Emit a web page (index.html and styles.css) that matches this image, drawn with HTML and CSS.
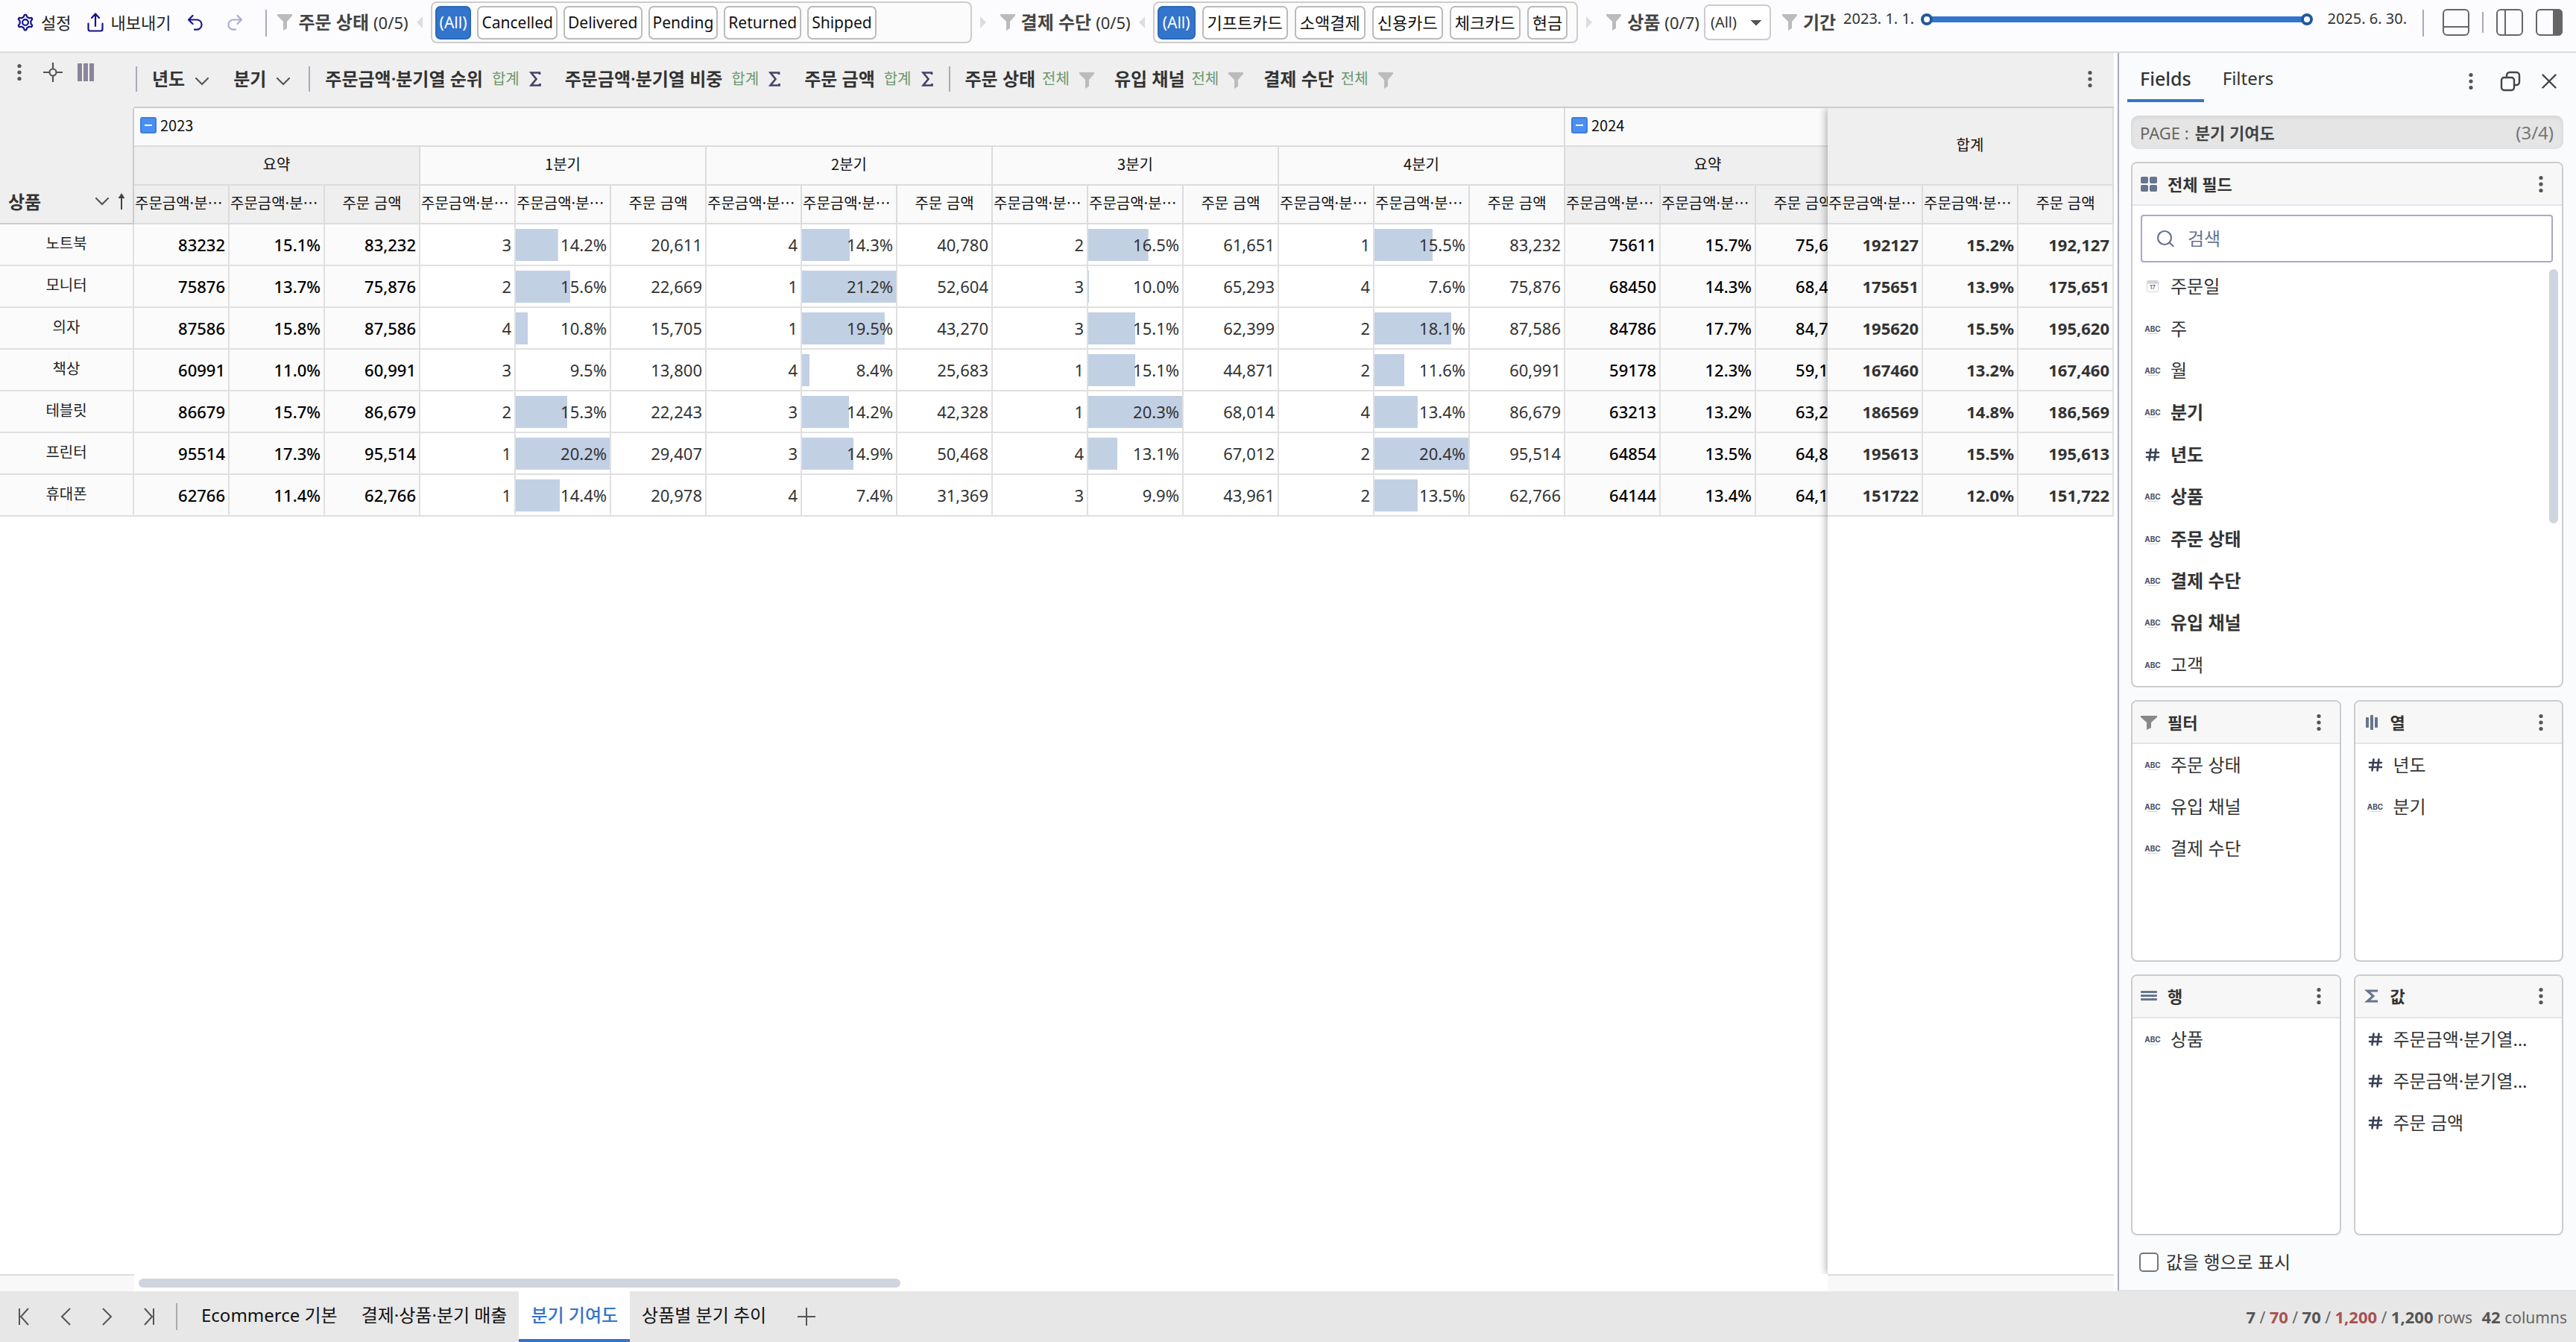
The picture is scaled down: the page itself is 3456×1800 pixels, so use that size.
FILE: index.html
```html
<!DOCTYPE html>
<html lang="ko">
<head>
    <meta charset="UTF-8">
    <meta name="viewport" content="width=device-width, initial-scale=1.0">
    <title>분기 기여도</title>
    <link rel="stylesheet" href="styles.css">
</head>
<body>
    <svg class="sprite" aria-hidden="true">
        <symbol id="i-funnel" viewBox="0 0 20 22"><path d="M0 0h20v2l-7 8v9l-5 3V10L0 2z" fill="currentColor"/></symbol>
        <symbol id="i-kebab" viewBox="0 0 8 24"><g fill="currentColor"><circle cx="4" cy="3.500" r="2.600"/><circle cx="4" cy="12" r="2.600"/><circle cx="4" cy="20.500" r="2.600"/></g></symbol>
        <symbol id="i-chevron" viewBox="0 0 20 12"><path d="M2 2l8 8 8-8" fill="none" stroke="currentColor" stroke-width="2.2" stroke-linecap="round"/></symbol>
        <symbol id="i-sigma" viewBox="0 0 16 20"><path d="M14 4V1.500H2.500l7 8.500-7 8.500H14.500V16" fill="none" stroke="currentColor" stroke-width="2.6"/></symbol>
        <symbol id="i-hash" viewBox="0 0 20 20"><path d="M2 7h16M2 13h16M7.500 2.500L5.500 17.500M14.500 2.500L12.500 17.500" fill="none" stroke="currentColor" stroke-width="2.600" stroke-linecap="round"/></symbol>
        <symbol id="i-tri-left" viewBox="0 0 8 16"><path d="M8 0v16L0 8z" fill="currentColor"/></symbol>
        <symbol id="i-tri-right" viewBox="0 0 8 16"><path d="M0 0v16l8-8z" fill="currentColor"/></symbol>
    </svg>

    <div class="app">
        <header class="toolbar">
            <div class="commands">
                <button type="button" class="command"><svg width="26" height="26" viewBox="0 0 24 24" fill="none" stroke="currentColor" stroke-width="2" stroke-linejoin="round"><path d="M9.800 4.300L11 1.500h2l1.200 2.800 2.400 1.400 3-.4 1 1.700-1.800 2.500v2.900l1.800 2.500-1 1.800-3-.4-2.400 1.400L13 20.500h-2l-1.200-2.800-2.400-1.400-3 .4-1-1.800 1.800-2.500V9.500L3.400 7l1-1.700 3 .4z" transform="translate(0 1)"/><circle cx="12" cy="12" r="3.600"/></svg>설정</button>
                <button type="button" class="command"><svg width="24" height="26" viewBox="0 0 24 26" fill="none" stroke="currentColor" stroke-width="2.200" stroke-linecap="round" stroke-linejoin="round"><path d="M2.500 14.500V22c0 1.500 1 2.500 2.500 2.500h14c1.500 0 2.500-1 2.500-2.500v-7.500M12 18V2M7 7l5-5.500L17 7"/></svg>내보내기</button>
                <button type="button" class="command" aria-label="Undo"><svg width="24" height="24" viewBox="0 0 24 24" fill="none" stroke="currentColor" stroke-width="2.200" stroke-linecap="round" stroke-linejoin="round"><path d="M8.500 3L3 8.500l5.500 5.500M3 8.500h12a6.700 6.700 0 0 1 0 13.200h-4"/></svg></button>
                <button type="button" class="command" aria-label="Redo" disabled><svg width="24" height="24" viewBox="0 0 24 24" fill="none" stroke="currentColor" stroke-width="2.200" stroke-linecap="round" stroke-linejoin="round"><path d="M15.500 3L21 8.500 15.500 14M21 8.500H9a6.700 6.700 0 0 0 0 13.200h4"/></svg></button>
            </div>

            <div class="filter filter-status">
                <svg class="funnel"><use href="#i-funnel"/></svg>
                <b>주문 상태</b><span class="count">(0/5)</span>
                <svg class="tri"><use href="#i-tri-left"/></svg>
                <div class="chips">
                    <button type="button" class="chip active">(All)</button>
                    <button type="button" class="chip">Cancelled</button>
                    <button type="button" class="chip">Delivered</button>
                    <button type="button" class="chip">Pending</button>
                    <button type="button" class="chip">Returned</button>
                    <button type="button" class="chip">Shipped</button>
                </div>
                <svg class="tri"><use href="#i-tri-right"/></svg>
            </div>

            <div class="filter filter-payment">
                <svg class="funnel"><use href="#i-funnel"/></svg>
                <b>결제 수단</b><span class="count">(0/5)</span>
                <svg class="tri"><use href="#i-tri-left"/></svg>
                <div class="chips">
                    <button type="button" class="chip active">(All)</button>
                    <button type="button" class="chip">기프트카드</button>
                    <button type="button" class="chip">소액결제</button>
                    <button type="button" class="chip">신용카드</button>
                    <button type="button" class="chip">체크카드</button>
                    <button type="button" class="chip">현금</button>
                </div>
                <svg class="tri"><use href="#i-tri-right"/></svg>
            </div>

            <div class="filter filter-product">
                <svg class="funnel"><use href="#i-funnel"/></svg>
                <label for="product"><b>상품</b></label><span class="count">(0/7)</span>
                <select id="product"><option>(All)</option></select>
            </div>

            <div class="filter filter-period">
                <svg class="funnel"><use href="#i-funnel"/></svg>
                <b>기간</b>
                <span class="date">2023. 1. 1.</span>
                <div class="range">
                    <input type="range" min="0" max="100" value="0" aria-label="시작일">
                    <input type="range" min="0" max="100" value="100" aria-label="종료일">
                </div>
                <span class="date">2025. 6. 30.</span>
            </div>

            <div class="layout-buttons">
                <button type="button" aria-label="Bottom panel"><svg width="36" height="36" viewBox="0 0 36 36" fill="none" stroke="currentColor" stroke-width="2"><rect x="1" y="1" width="34" height="34" rx="5"/><path d="M1 24h34"/></svg></button>
                <span class="split"></span>
                <button type="button" aria-label="Left panel"><svg width="36" height="36" viewBox="0 0 36 36" fill="none" stroke="currentColor" stroke-width="2"><rect x="1" y="1" width="34" height="34" rx="5"/><path d="M12 1v34"/></svg></button>
                <button type="button" aria-label="Right panel"><svg width="36" height="36" viewBox="0 0 36 36" fill="none" stroke="currentColor" stroke-width="2"><rect x="1" y="1" width="34" height="34" rx="5"/><path d="M24 1h6a5 5 0 0 1 5 5v24a5 5 0 0 1-5 5h-6z" fill="currentColor"/></svg></button>
            </div>
        </header>

        <main class="workspace">
            <div class="field-bar">
                <div class="grid-tools">
                    <button type="button" aria-label="Menu"><svg class="kebab"><use href="#i-kebab"/></svg></button>
                    <button type="button" aria-label="Fit"><svg width="26" height="26" viewBox="0 0 26 26" fill="none" stroke="#555" stroke-width="2.200"><circle cx="13" cy="13" r="4.500"/><path d="M13 0v8.500M13 17.500V26M0 13h8.500M17.500 13H26"/></svg></button>
                    <button type="button" aria-label="Columns"><svg width="22" height="24" viewBox="0 0 22 24" fill="#8a8599"><path d="M0 0h6v24H0zM8 0h6v24H8zM16 0h6v24h-6z"/></svg></button>
                </div>
                <div class="fields">
                    <div class="field-group columns">
                        <button type="button" class="field">년도<svg class="chevron"><use href="#i-chevron"/></svg></button>
                        <button type="button" class="field">분기<svg class="chevron"><use href="#i-chevron"/></svg></button>
                    </div>
                    <div class="field-group values">
                        <button type="button" class="field">주문금액·분기열 순위<small>합계</small><svg class="sigma"><use href="#i-sigma"/></svg></button>
                        <button type="button" class="field">주문금액·분기열 비중<small>합계</small><svg class="sigma"><use href="#i-sigma"/></svg></button>
                        <button type="button" class="field">주문 금액<small>합계</small><svg class="sigma"><use href="#i-sigma"/></svg></button>
                    </div>
                    <div class="field-group filters">
                        <button type="button" class="field">주문 상태<small>전체</small><svg class="funnel"><use href="#i-funnel"/></svg></button>
                        <button type="button" class="field">유입 채널<small>전체</small><svg class="funnel"><use href="#i-funnel"/></svg></button>
                        <button type="button" class="field">결제 수단<small>전체</small><svg class="funnel"><use href="#i-funnel"/></svg></button>
                    </div>
                    <button type="button" class="more" aria-label="More"><svg class="kebab"><use href="#i-kebab"/></svg></button>
                </div>
            </div>

            <div class="grid-area">
                <div class="pivot">
                    <table>
                        <colgroup><col class="col-head"><col span="18"></colgroup>
                        <thead>
                            <tr>
                                <th rowspan="3" class="corner"><div class="corner-label">상품<svg class="chevron"><use href="#i-chevron"/></svg><svg class="sort" viewBox="0 0 10 22"><path d="M5 0l4.500 7H.5zM4 6h2v16H4z" fill="#444"/></svg></div></th>
                                <th colspan="15" class="year"><div class="year-label"><button type="button" class="collapse" aria-label="접기"></button>2023</div></th>
                                <th colspan="3" class="year"><div class="year-label"><button type="button" class="collapse" aria-label="접기"></button>2024</div></th>
                            </tr>
                            <tr>
                                <th colspan="3" class="sum">요약</th>
                                <th colspan="3">1분기</th>
                                <th colspan="3">2분기</th>
                                <th colspan="3">3분기</th>
                                <th colspan="3">4분기</th>
                                <th colspan="3" class="sum">요약</th>
                            </tr>
                            <tr>
                                <th class="sum">주문금액·분기열 순위</th><th class="sum">주문금액·분기열 비중</th><th class="sum">주문 금액</th>
                                <th>주문금액·분기열 순위</th><th>주문금액·분기열 비중</th><th>주문 금액</th>
                                <th>주문금액·분기열 순위</th><th>주문금액·분기열 비중</th><th>주문 금액</th>
                                <th>주문금액·분기열 순위</th><th>주문금액·분기열 비중</th><th>주문 금액</th>
                                <th>주문금액·분기열 순위</th><th>주문금액·분기열 비중</th><th>주문 금액</th>
                                <th class="sum">주문금액·분기열 순위</th><th class="sum">주문금액·분기열 비중</th><th class="sum">주문 금액</th>
                            </tr>
                        </thead>
                        <tbody>
                            <tr>
                                <th>노트북</th>
                                <td class="sum">83232</td><td class="sum">15.1%</td><td class="sum">83,232</td>
                                <td>3</td><td class="bar" style="--bar: 45%">14.2%</td><td>20,611</td>
                                <td>4</td><td class="bar" style="--bar: 51%">14.3%</td><td>40,780</td>
                                <td>2</td><td class="bar" style="--bar: 64%">16.5%</td><td>61,651</td>
                                <td>1</td><td class="bar" style="--bar: 62%">15.5%</td><td>83,232</td>
                                <td class="sum">75611</td><td class="sum">15.7%</td><td class="sum">75,611</td>
                            </tr>
                            <tr>
                                <th>모니터</th>
                                <td class="sum">75876</td><td class="sum">13.7%</td><td class="sum">75,876</td>
                                <td>2</td><td class="bar" style="--bar: 58%">15.6%</td><td>22,669</td>
                                <td>1</td><td class="bar" style="--bar: 100%">21.2%</td><td>52,604</td>
                                <td>3</td><td class="bar" style="--bar: 1%">10.0%</td><td>65,293</td>
                                <td>4</td><td class="bar" style="--bar: 0%">7.6%</td><td>75,876</td>
                                <td class="sum">68450</td><td class="sum">14.3%</td><td class="sum">68,450</td>
                            </tr>
                            <tr>
                                <th>의자</th>
                                <td class="sum">87586</td><td class="sum">15.8%</td><td class="sum">87,586</td>
                                <td>4</td><td class="bar" style="--bar: 13%">10.8%</td><td>15,705</td>
                                <td>1</td><td class="bar" style="--bar: 88%">19.5%</td><td>43,270</td>
                                <td>3</td><td class="bar" style="--bar: 50%">15.1%</td><td>62,399</td>
                                <td>2</td><td class="bar" style="--bar: 82%">18.1%</td><td>87,586</td>
                                <td class="sum">84786</td><td class="sum">17.7%</td><td class="sum">84,786</td>
                            </tr>
                            <tr>
                                <th>책상</th>
                                <td class="sum">60991</td><td class="sum">11.0%</td><td class="sum">60,991</td>
                                <td>3</td><td class="bar" style="--bar: 0%">9.5%</td><td>13,800</td>
                                <td>4</td><td class="bar" style="--bar: 8%">8.4%</td><td>25,683</td>
                                <td>1</td><td class="bar" style="--bar: 50%">15.1%</td><td>44,871</td>
                                <td>2</td><td class="bar" style="--bar: 32%">11.6%</td><td>60,991</td>
                                <td class="sum">59178</td><td class="sum">12.3%</td><td class="sum">59,178</td>
                            </tr>
                            <tr>
                                <th>테블릿</th>
                                <td class="sum">86679</td><td class="sum">15.7%</td><td class="sum">86,679</td>
                                <td>2</td><td class="bar" style="--bar: 55%">15.3%</td><td>22,243</td>
                                <td>3</td><td class="bar" style="--bar: 50%">14.2%</td><td>42,328</td>
                                <td>1</td><td class="bar" style="--bar: 100%">20.3%</td><td>68,014</td>
                                <td>4</td><td class="bar" style="--bar: 46%">13.4%</td><td>86,679</td>
                                <td class="sum">63213</td><td class="sum">13.2%</td><td class="sum">63,213</td>
                            </tr>
                            <tr>
                                <th>프린터</th>
                                <td class="sum">95514</td><td class="sum">17.3%</td><td class="sum">95,514</td>
                                <td>1</td><td class="bar" style="--bar: 100%">20.2%</td><td>29,407</td>
                                <td>3</td><td class="bar" style="--bar: 55%">14.9%</td><td>50,468</td>
                                <td>4</td><td class="bar" style="--bar: 31%">13.1%</td><td>67,012</td>
                                <td>2</td><td class="bar" style="--bar: 100%">20.4%</td><td>95,514</td>
                                <td class="sum">64854</td><td class="sum">13.5%</td><td class="sum">64,854</td>
                            </tr>
                            <tr>
                                <th>휴대폰</th>
                                <td class="sum">62766</td><td class="sum">11.4%</td><td class="sum">62,766</td>
                                <td>1</td><td class="bar" style="--bar: 47%">14.4%</td><td>20,978</td>
                                <td>4</td><td class="bar" style="--bar: 0%">7.4%</td><td>31,369</td>
                                <td>3</td><td class="bar" style="--bar: 0%">9.9%</td><td>43,961</td>
                                <td>2</td><td class="bar" style="--bar: 46%">13.5%</td><td>62,766</td>
                                <td class="sum">64144</td><td class="sum">13.4%</td><td class="sum">64,144</td>
                            </tr>
                        </tbody>
                    </table>
                </div>
                <div class="total">
                    <table>
                        <thead>
                            <tr><th colspan="3" class="sum grand">합계</th></tr>
                            <tr><th>주문금액·분기열 순위</th><th>주문금액·분기열 비중</th><th>주문 금액</th></tr>
                        </thead>
                        <tbody>
                            <tr><td>192127</td><td>15.2%</td><td>192,127</td></tr>
                            <tr><td>175651</td><td>13.9%</td><td>175,651</td></tr>
                            <tr><td>195620</td><td>15.5%</td><td>195,620</td></tr>
                            <tr><td>167460</td><td>13.2%</td><td>167,460</td></tr>
                            <tr><td>186569</td><td>14.8%</td><td>186,569</td></tr>
                            <tr><td>195613</td><td>15.5%</td><td>195,613</td></tr>
                            <tr><td>151722</td><td>12.0%</td><td>151,722</td></tr>
                        </tbody>
                    </table>
                </div>
            </div>
            <div class="scroll-row">
                <div class="scroll-cap"></div>
                <div class="scroll-track"><div class="scroll-thumb"></div></div>
                <div class="scroll-cap wide"></div>
            </div>
        </main>

        <aside class="side">
            <div class="side-head">
                <button type="button" class="side-tab active">Fields</button>
                <button type="button" class="side-tab">Filters</button>
                <div class="side-actions">
                    <button type="button" aria-label="More"><svg class="kebab"><use href="#i-kebab"/></svg></button>
                    <button type="button" aria-label="Detach"><svg width="28" height="28" viewBox="0 0 28 28" fill="none" stroke="currentColor" stroke-width="2.400"><rect x="2" y="9" width="17" height="17" rx="3.500"/><path d="M9 8.500V6a4 4 0 0 1 4-4h9a4 4 0 0 1 4 4v9a4 4 0 0 1-4 4h-2.500"/></svg></button>
                    <button type="button" aria-label="Close"><svg width="20" height="20" viewBox="0 0 20 20" fill="none" stroke="currentColor" stroke-width="2.400" stroke-linecap="round"><path d="M1.500 1.500l17 17M18.500 1.500l-17 17"/></svg></button>
                </div>
            </div>
            <div class="page-bar"><span>PAGE :</span><b>분기 기여도</b><span class="page-no">(3/4)</span></div>

            <section class="card card-all">
                <h2><svg width="22" height="20" viewBox="0 0 22 20" fill="currentColor"><rect width="10" height="9" rx="2"/><rect x="12" width="10" height="9" rx="2"/><rect y="11" width="10" height="9" rx="2"/><rect x="12" y="11" width="10" height="9" rx="2"/></svg>전체 필드<button type="button" aria-label="More"><svg class="kebab"><use href="#i-kebab"/></svg></button></h2>
                <label class="search">
                    <svg width="24" height="24" viewBox="0 0 24 24" fill="none" stroke="currentColor" stroke-width="2.200" stroke-linecap="round"><circle cx="11" cy="11" r="9"/><path d="M17.500 17.500l5 4.500"/></svg>
                    <input type="text" placeholder="검색" aria-label="검색">
                </label>
                <div class="list-wrap">
                    <ul>
                        <li><svg class="date-icon" viewBox="0 0 24 20"><rect x="4.500" y="2.500" width="15" height="15" rx="2" fill="#fff" stroke="#d0d3dd"/><path d="M4.500 2.500h15v4h-15z" fill="#d0d3dd"/><text x="12" y="14" class="day">17</text></svg>주문일</li>
                        <li><i class="abc">ABC</i>주</li>
                        <li><i class="abc">ABC</i>월</li>
                        <li class="used"><i class="abc">ABC</i>분기</li>
                        <li class="used"><svg class="hash"><use href="#i-hash"/></svg>년도</li>
                        <li class="used"><i class="abc">ABC</i>상품</li>
                        <li class="used"><i class="abc">ABC</i>주문 상태</li>
                        <li class="used"><i class="abc">ABC</i>결제 수단</li>
                        <li class="used"><i class="abc">ABC</i>유입 채널</li>
                        <li><i class="abc">ABC</i>고객</li>
                    </ul>
                    <div class="list-thumb"></div>
                </div>
            </section>

            <div class="card-row">
                <section class="card">
                    <h2><svg width="22" height="22" viewBox="0 0 22 22"><path d="M0 2h22v2l-8 7v7l-6 3V11L0 4z" fill="#888"/></svg>필터<button type="button" aria-label="More"><svg class="kebab"><use href="#i-kebab"/></svg></button></h2>
                    <ul>
                        <li><i class="abc">ABC</i>주문 상태</li>
                        <li><i class="abc">ABC</i>유입 채널</li>
                        <li><i class="abc">ABC</i>결제 수단</li>
                    </ul>
                </section>
                <section class="card">
                    <h2><svg width="22" height="20" viewBox="0 0 22 20" fill="currentColor"><rect x="3" y="3" width="4" height="14" rx="1"/><rect x="9" width="4" height="20" rx="1"/><rect x="15" y="3" width="4" height="14" rx="1"/></svg>열<button type="button" aria-label="More"><svg class="kebab"><use href="#i-kebab"/></svg></button></h2>
                    <ul>
                        <li><svg class="hash"><use href="#i-hash"/></svg>년도</li>
                        <li><i class="abc">ABC</i>분기</li>
                    </ul>
                </section>
            </div>
            <div class="card-row">
                <section class="card">
                    <h2><svg width="22" height="14" viewBox="0 0 22 14" fill="currentColor"><rect width="22" height="3" rx="1"/><rect y="5" width="22" height="3" rx="1"/><rect y="10" width="22" height="3" rx="1"/></svg>행<button type="button" aria-label="More"><svg class="kebab"><use href="#i-kebab"/></svg></button></h2>
                    <ul>
                        <li><i class="abc">ABC</i>상품</li>
                    </ul>
                </section>
                <section class="card">
                    <h2><svg width="22" height="18" viewBox="0 0 22 18" fill="none" stroke="currentColor" stroke-width="3"><path d="M19 2H5l8 7-8 7h14"/></svg>값<button type="button" aria-label="More"><svg class="kebab"><use href="#i-kebab"/></svg></button></h2>
                    <ul>
                        <li><svg class="hash"><use href="#i-hash"/></svg><span>주문금액·분기열 순위</span></li>
                        <li><svg class="hash"><use href="#i-hash"/></svg><span>주문금액·분기열 비중</span></li>
                        <li><svg class="hash"><use href="#i-hash"/></svg><span>주문 금액</span></li>
                    </ul>
                </section>
            </div>
            <label class="as-rows"><input type="checkbox">값을 행으로 표시</label>
        </aside>

        <footer class="status">
            <div class="pager">
                <button type="button" aria-label="First"><svg width="16" height="24" viewBox="0 0 16 24"><path d="M2 1v22M14 1L4 12l10 11"/></svg></button>
                <button type="button" aria-label="Previous"><svg width="16" height="24" viewBox="0 0 16 24"><path d="M14 1L3 12l11 11"/></svg></button>
                <button type="button" aria-label="Next"><svg width="16" height="24" viewBox="0 0 16 24"><path d="M2 1l11 11L2 23"/></svg></button>
                <button type="button" aria-label="Last"><svg width="16" height="24" viewBox="0 0 16 24"><path d="M14 1v22M2 1l10 11L2 23"/></svg></button>
            </div>
            <nav class="sheets">
                <a href="#basic">Ecommerce 기본</a>
                <a href="#sales">결제·상품·분기 매출</a>
                <a href="#share" class="active">분기 기여도</a>
                <a href="#trend">상품별 분기 추이</a>
            </nav>
            <button type="button" class="add" aria-label="Add page"><svg width="24" height="24" viewBox="0 0 24 24"><path d="M12 0v24M0 12h24"/></svg></button>
            <p class="counts"><b>7</b> / <b class="red">70</b> / <b>70</b> / <b class="red">1,200</b> / <b>1,200</b> rows <b class="cols">42</b> columns</p>
        </footer>
    </div>
</body>
</html>
```
FILE: styles.css
```css
* {
    box-sizing: border-box;
}
body {
    margin: 0;
    font-family: "Noto Sans", "Noto Sans CJK KR", sans-serif;
    font-size: 22px;
    line-height: 30px;
    color: #333;
    background: #fff;
}
button, input, select {
    font: inherit;
    color: inherit;
}
button {
    padding: 0;
    border: none;
    background: none;
    cursor: pointer;
}
svg {
    display: block;
    flex: none;
}
.sprite {
    position: absolute;
    width: 0;
    height: 0;
}
.kebab {
    width: 8px;
    height: 24px;
    color: #555;
}
.chevron {
    width: 20px;
    height: 12px;
    color: #555;
}
.funnel {
    width: 20px;
    height: 22px;
    color: #bbb;
}
.sigma {
    width: 16px;
    height: 20px;
    color: #44406a;
}

.app {
    display: grid;
    grid-template-columns: minmax(0, 1fr) 615px;
    grid-template-rows: 71px minmax(0, 1fr) 68px;
    height: 100vh;
}

/* toolbar */
.toolbar {
    grid-column: 1 / -1;
    display: flex;
    align-items: flex-start;
    padding-left: 21px;
    background: #fcfcfe;
    border-bottom: 2px solid #ddd;
}
.toolbar > div {
    height: 60px;
    display: flex;
    align-items: center;
}
.commands {
    gap: 21px;
    padding-right: 31px;
    position: relative;
}
.commands::after, .layout-buttons::before {
    content: "";
    position: absolute;
    right: 0;
    top: 13px;
    width: 2px;
    height: 36px;
    background: #a9a9be;
}
.command {
    display: flex;
    align-items: center;
    gap: 8px;
    color: #16128c;
}
.command:nth-child(-n+2) {
    color: #222;
}
.command svg {
    color: #16128c;
}
.command:nth-child(4) {
    margin-left: 8px;
    opacity: 0.35;
}
.filter {
    gap: 6px;
    white-space: nowrap;
}
.filter b {
    font-size: 24px;
    font-weight: 600;
    color: #444;
}
.filter .funnel {
    margin-right: 2px;
}
.count {
    color: #333;
}
.tri {
    width: 10px;
    height: 16px;
    color: #ddd;
    margin: 0 4px;
}
.filter-status, .filter-payment, .filter-product {
    padding-left: 14px;
}
.filter-period {
    flex: 1;
    padding-left: 15px;
}
.chips {
    display: flex;
    align-items: center;
    gap: 9px;
    height: 56px;
    padding: 0 12px 0 4px;
    border: 2px solid #ccc;
    border-radius: 8px;
    background: #fbfbfb;
}
.filter-status .chips {
    gap: 8px;
    width: 726px;
}
.filter-status .chip {
    padding: 0 4px;
    font-size: 21px;
}
.chip {
    height: 45px;
    padding: 0 5px;
    border: 2px solid #bbb;
    border-radius: 7px;
    background: #fff;
    color: #111;
}
.chip.active {
    border-color: #2c68b8;
    background: #3374cc;
    color: #fff;
    font-size: 21px;
}
select {
    width: 90px;
    height: 48px;
    padding: 0 7px;
    border: 2px solid #ccc;
    border-radius: 7px;
    appearance: none;
    font-size: 20px;
    background-color: #fff;
    background-image: linear-gradient(to bottom left, #555 50%, transparent 50%), linear-gradient(to bottom right, #555 50%, transparent 50%);
    background-size: 7px 8px;
    background-position: 61px 19px, 68px 19px;
    background-repeat: no-repeat;
}
.date {
    padding: 0 4px 10px 4px;
    font-size: 20px;
}
.range {
    position: relative;
    flex: 1;
    height: 8px;
    margin: 0 16px 8px 6px;
    background: #3374cc;
}
.range input {
    position: absolute;
    left: -7px;
    top: -4px;
    width: calc(100% + 14px);
    height: 16px;
    margin: 0;
    appearance: none;
    background: none;
    pointer-events: none;
}
.range input::-webkit-slider-thumb {
    appearance: none;
    width: 16px;
    height: 16px;
    border: 4px solid #22589c;
    border-radius: 50%;
    background: #fff;
    pointer-events: auto;
}
.layout-buttons {
    position: relative;
    gap: 17px;
    padding: 0 18px 0 27px;
    margin-left: 17px;
    color: #666;
}
.layout-buttons::before {
    right: auto;
    left: 0;
}
.split {
    width: 2px;
    height: 28px;
    background: #a9a9be;
}

/* pivot grid */
.workspace {
    display: flex;
    flex-direction: column;
    margin-right: 5px;
    overflow: hidden;
}
.field-bar {
    display: flex;
    height: 74px;
    background: #efefef;
}
.grid-tools {
    display: flex;
    align-items: center;
    gap: 20px;
    width: 180px;
    height: 52px;
    padding-left: 22px;
}
.grid-tools button:nth-child(2) {
    margin-left: 8px;
}
.fields {
    flex: 1;
    display: flex;
    align-items: center;
    padding-bottom: 2px;
    border-bottom: 2px solid #ccc;
}
.field-group {
    display: flex;
    align-items: center;
    height: 34px;
    margin-left: 2px;
    padding: 0 22px 0 20px;
    border-left: 2px solid #a9a9be;
}
.field-group.columns, .field-group.values {
    gap: 32px;
}
.field-group.values {
    padding-right: 19px;
}
.field-group.filters {
    gap: 27px;
}
.field {
    display: flex;
    align-items: center;
    font-size: 24px;
    font-weight: 600;
}
.field small {
    margin: 0 13px 0 9px;
    font-size: 20px;
    font-weight: 400;
    color: #6c986c;
}
.values .field small {
    margin-left: 12px;
}
.field .funnel {
    margin-top: 3px;
}
.field .chevron {
    margin: 6px 0 0 13px;
}
.more {
    margin: 0 28px 0 auto;
}
.grid-area {
    flex: 1;
    display: flex;
    min-height: 0;
    overflow: hidden;
}
.pivot {
    flex: 1;
    min-width: 0;
    overflow: hidden;
}
.total {
    position: relative;
    flex: none;
    width: 384px;
    background: #fff;
    box-shadow: -2px 0 10px rgba(0, 0, 0, 0.3);
}
table {
    table-layout: fixed;
    border-collapse: separate;
    border-spacing: 0;
}
.pivot table {
    width: 2484px;
}
.total table {
    width: 100%;
}
.col-head {
    width: 180px;
}
thead th {
    height: 52px;
    padding: 0 1px 4px 1px;
    overflow: hidden;
    border-right: 2px solid #dcdcdc;
    border-bottom: 2px solid #dcdcdc;
    background: #fafafa;
    color: #111;
    font-family: "Noto Sans CJK KR", "Noto Sans", sans-serif;
    font-size: 20px;
    font-weight: 400;
    white-space: nowrap;
    text-overflow: ellipsis;
}
thead th.sum {
    background: #efefef;
}
.total thead th {
    background: #f3f3f3;
}
.total thead th.grand {
    height: 104px;
    background: #efefef;
}
thead th.corner {
    padding: 0;
    border-color: #ccc;
    background: #efefef;
    vertical-align: bottom;
}
.corner-label {
    display: flex;
    align-items: center;
    gap: 10px;
    padding: 0 9px 14px 11px;
    font-size: 24px;
    font-weight: 600;
    color: #333;
}
.corner-label .chevron {
    margin-left: auto;
}
.sort {
    width: 12px;
    height: 22px;
}
.year-label {
    display: flex;
    align-items: center;
    gap: 5px;
    padding-left: 7px;
}
.collapse {
    display: grid;
    place-items: center;
    width: 22px;
    height: 22px;
    border: 2px solid #3f7ddb;
    border-radius: 3px;
    background: #4a8ff3;
}
.collapse::after {
    content: "";
    width: 10px;
    height: 2px;
    background: #fff;
}
tbody th, tbody td {
    height: 56px;
    padding: 0 4px;
    border-right: 2px solid #e0e0e0;
    border-bottom: 2px solid #e0e0e0;
    text-align: right;
}
tbody th {
    padding-bottom: 2px;
    background: #fbfbfb;
    text-align: center;
    font-size: 20px;
    font-weight: 400;
    color: #222;
}
td.sum {
    background: #fbfbfb;
    color: #000;
    font-weight: 500;
}
td.bar {
    background: linear-gradient(#c2d0e4, #c2d0e4) no-repeat 0 6px;
    background-size: var(--bar) 43px;
    background-origin: padding-box;
}
.total td {
    background: #fbfbfb;
    font-weight: 700;
}
.scroll-row {
    display: flex;
    height: 23px;
}
.scroll-cap {
    width: 180px;
    border-top: 2px solid #dcdcdc;
    background: #f8f8f8;
}
.scroll-cap.wide {
    width: 384px;
}
.scroll-track {
    flex: 1;
    padding: 6px;
}
.scroll-thumb {
    width: 45.2%;
    height: 12px;
    border-radius: 6px;
    background: #d0d4de;
}

/* side panel */
.side {
    display: flex;
    flex-direction: column;
    gap: 17px;
    padding: 0 17px 18px 16px;
    border-left: 2px solid #a9a9c6;
    border-bottom: 2px solid #dfe4ec;
    background: #fafbfd;
}
.side-head {
    display: flex;
    height: 67px;
    margin-left: -5px;
}
.side-tab {
    height: 66px;
    padding: 6px 17px 0 17px;
    border-bottom: 4px solid transparent;
    font-size: 24px;
}
.side-tab + .side-tab {
    padding-left: 25px;
}
.side-tab.active {
    border-color: #3374cc;
    font-size: 25px;
    font-weight: 500;
}
.side-actions {
    display: flex;
    align-items: center;
    gap: 33px;
    margin: 8px 9px 0 auto;
    color: #444;
}
.side-actions button + button {
    margin-left: 2px;
}
.side-actions button:last-child {
    margin-left: -5px;
}
.page-bar {
    display: flex;
    align-items: center;
    gap: 8px;
    height: 45px;
    padding: 0 13px 0 12px;
    border-radius: 10px;
    background: #e5e5e5;
    box-shadow: inset 0 2px 6px rgba(0, 0, 0, 0.08);
    color: #666;
}
.page-bar b {
    font-weight: 600;
    color: #444;
}
.page-no {
    margin-left: auto;
    font-size: 24px;
    color: #777;
}
.card {
    flex: 1;
    display: flex;
    flex-direction: column;
    min-width: 0;
    border: 2px solid #ccc;
    border-radius: 8px;
    background: #fff;
    overflow: hidden;
}
.card-all {
    flex: 2 0 0;
}
.card-row {
    flex: 1 0 0;
    display: flex;
    gap: 17px;
}
.card h2 {
    display: flex;
    align-items: center;
    gap: 14px;
    height: 57px;
    margin: 0;
    padding: 0 24px 0 11px;
    border-bottom: 2px solid #e1e5ec;
    background: #f7f7f7;
    font-size: 22px;
    font-weight: 600;
}
.card h2 > svg {
    color: #67748e;
}
.card h2 button {
    margin-left: auto;
}
.search {
    display: flex;
    align-items: center;
    gap: 18px;
    height: 64px;
    margin: 12px 12px 4px 11px;
    padding: 0 19px;
    border: 2px solid #a9a9c6;
    border-radius: 4px;
    color: #67748e;
}
.search input {
    flex: 1;
    min-width: 0;
    padding: 0;
    border: none;
    outline: none;
    background: none;
    font-size: 24px;
}
.search input::placeholder {
    color: #67748e;
}
.list-wrap {
    flex: 1;
    display: flex;
    justify-content: space-between;
}
.list-wrap ul {
    display: flex;
    flex-direction: column;
}
.list-wrap li {
    flex: 1;
}
.list-thumb {
    width: 12px;
    height: 341px;
    margin: 5px 5px 0 0;
    border-radius: 6px;
    background: #d0d4de;
}
ul {
    margin: 0;
    padding: 0 42px 0 15px;
    list-style: none;
}
li {
    display: flex;
    align-items: center;
    gap: 12px;
    height: 56px;
    font-size: 24px;
}
li.used {
    font-weight: 600;
}
li span {
    overflow: hidden;
    white-space: nowrap;
    text-overflow: ellipsis;
}
.abc {
    width: 24px;
    font: 700 10px/14px Inter, sans-serif;
    text-align: center;
    color: #4a5168;
    background: linear-gradient(#cfd3e2, #cfd3e2) no-repeat 50% 100%;
    background-size: 14px 1px;
}
.hash {
    width: 24px;
    height: 20px;
    color: #3a4157;
}
.date-icon {
    width: 24px;
    height: 20px;
}
.day {
    font: 8px Inter, sans-serif;
    text-anchor: middle;
    fill: #333b50;
}
.as-rows {
    display: flex;
    align-items: center;
    gap: 10px;
    height: 38px;
    padding-left: 11px;
    font-size: 24px;
}
.as-rows input {
    width: 26px;
    height: 26px;
    margin: 0;
    appearance: none;
    border: 2px solid #777;
    border-radius: 5px;
    background: #fff;
}

/* status bar */
.status {
    grid-column: 1 / -1;
    display: flex;
    align-items: center;
    padding: 0 12px 0 24px;
    background: #e7e7e7;
}
.status svg {
    fill: none;
    stroke: #555;
    stroke-width: 2;
}
.pager {
    display: flex;
    align-items: center;
    gap: 40px;
    height: 36px;
    padding-right: 28px;
    border-right: 2px solid #aaa;
}
.sheets {
    display: flex;
    margin-left: 16px;
}
.sheets a {
    height: 68px;
    padding: 0 16px;
    border-bottom: 4px solid transparent;
    color: #111;
    font-size: 24px;
    line-height: 64px;
    text-decoration: none;
}
.sheets a.active {
    border-color: #3374cc;
    background: #fff;
    color: #3374cc;
    font-weight: 500;
}
.add {
    margin-left: 26px;
}
.counts {
    margin: 0 0 0 auto;
    font-size: 21px;
    color: #666;
}
.counts b {
    font-size: 22px;
    color: #555;
}
.counts .red {
    color: #a65252;
}
.counts .cols {
    margin-left: 7px;
}
```
